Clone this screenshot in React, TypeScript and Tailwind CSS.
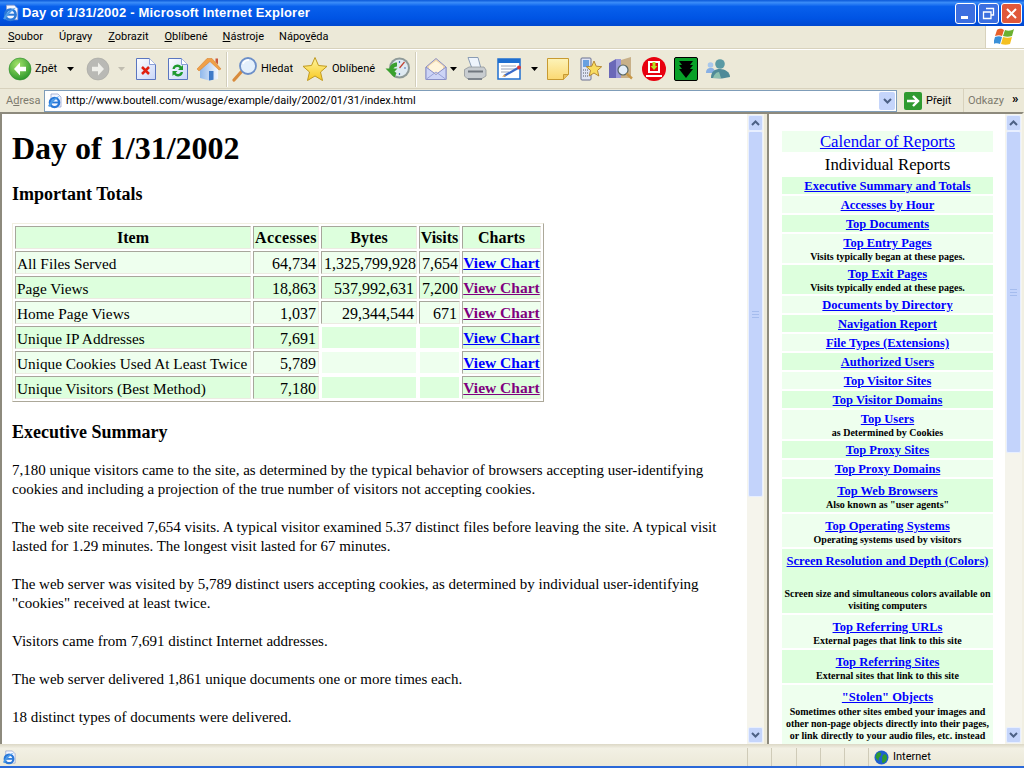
import React from "react";

const ui = "font-['Roboto',sans-serif]";
const serif = "font-['Liberation_Serif',serif]";

function IE({ s = 16 }: { s?: number }) {
  return (
    <svg width={s} height={s} viewBox="0 0 16 16" className="shrink-0">
      <path d="M4 1h7l3 3v10H4z" fill="#f4f6ff" stroke="#8a9ac8" strokeWidth=".7" />
      <circle cx="7.500" cy="9.500" r="4.600" fill="none" stroke="#2a78d8" strokeWidth="2.400" />
      <path d="M3.500 9.500h8" stroke="#2a78d8" strokeWidth="1.800" />
      <path d="M1 13c3-6 7-9 12-10-2 1-8 6-10 11z" fill="#4a9ae8" />
    </svg>
  );
}
const Back = () => (
  <svg width="24" height="24" viewBox="0 0 24 24" className="shrink-0">
    <defs>
      <radialGradient id="g1" cx=".4" cy=".3" r=".8"><stop offset="0" stopColor="#a4e36a" /><stop offset="1" stopColor="#1f8f24" /></radialGradient>
    </defs>
    <circle cx="12" cy="12" r="11" fill="url(#g1)" stroke="#2a8a2a" strokeWidth=".6" />
    <path d="M12 5.500 6 12l6 6.500v-4.200h6v-4.600h-6z" fill="#fff" />
  </svg>
);
const Fwd = () => (
  <svg width="24" height="24" viewBox="0 0 24 24" className="shrink-0">
    <circle cx="12" cy="12" r="11" fill="#b9b9b5" stroke="#a5a5a0" strokeWidth=".6" />
    <path d="M12 5.500 18 12l-6 6.500v-4.200H6v-4.600h6z" fill="#efefea" />
  </svg>
);
const Doc = ({ children }: { children: React.ReactNode }) => (
  <svg width="22" height="24" viewBox="0 0 22 24" className="shrink-0">
    <defs><linearGradient id="d" x1="0" y1="0" x2="1" y2="1"><stop offset="0" stopColor="#ffffff" /><stop offset="1" stopColor="#c8d6f8" /></linearGradient></defs>
    <path d="M1.500 1.500h13l6 6v15h-19z" fill="url(#d)" stroke="#5a76c0" />
    <path d="M14.500 1.500v6h6" fill="#fff" stroke="#8aa0d8" />
    {children}
  </svg>
);
const Home = () => (
  <svg width="26" height="24" viewBox="0 0 26 24" className="shrink-0">
    <defs><linearGradient id="h" x1="0" y1="0" x2="1" y2="0"><stop offset="0" stopColor="#8fb8ec" /><stop offset="1" stopColor="#f4f6fc" /></linearGradient></defs>
    <path d="M4 11 13 4l9 7v11l-9 1.500L4 21z" fill="url(#h)" />
    <path d="M1 12 11 1.500h5L25 12l-2 1-9-8.500L3 14z" fill="#f0a048" stroke="#d47a24" strokeWidth=".5" />
    <path d="M19.500 1.500h2.500v6l-2.500-2.500z" fill="#c8563a" />
    <path d="M13 14h4.500v8.800L13 23.500z" fill="#3f7ac8" />
  </svg>
);
const Search = () => (
  <svg width="26" height="26" viewBox="0 0 26 26" className="shrink-0">
    <path d="M2 24 10 15" stroke="#d88b3c" strokeWidth="3.200" strokeLinecap="round" />
    <circle cx="16" cy="10" r="8" fill="#e4f0fc" stroke="#6c8fc8" strokeWidth="1.800" />
    <path d="M11 8c1-3 3-4 6-4" stroke="#fff" strokeWidth="1.500" fill="none" />
  </svg>
);
const Star = () => (
  <svg width="26" height="26" viewBox="0 0 26 26" className="shrink-0">
    <defs><linearGradient id="st" x1="0" y1="0" x2="0" y2="1"><stop offset="0" stopColor="#fff6a0" /><stop offset="1" stopColor="#f8c820" /></linearGradient></defs>
    <path d="M13 1.500 16.500 9.500 25 10.300 18.500 16 20.500 24.500 13 20 5.500 24.500 7.500 16 1 10.300 9.500 9.500z" fill="url(#st)" stroke="#c09a20" />
  </svg>
);
const History = () => (
  <svg width="26" height="26" viewBox="0 0 26 26" className="shrink-0">
    <circle cx="14.500" cy="12" r="10.500" fill="#8f9a98" />
    <circle cx="14.500" cy="12" r="8.500" fill="#dfeaf2" />
    <path d="M14.500 12 19.500 6" stroke="#c04030" strokeWidth="1.200" />
    <path d="M14.500 5v2M21 12h-2M14.500 19v-2" stroke="#4a70b8" strokeWidth="1.200" />
    <path d="M.5 12.500h4C5 9 8 6.500 12 6.500v4c-2 0-3 1-3.500 2h4l-3 3 2 1.500-2 4.500z" fill="#3aa02f" />
  </svg>
);
const Mail = () => (
  <svg width="24" height="24" viewBox="0 0 24 24" className="shrink-0">
    <path d="M2 10 12 1.500 22 10v12.500H2z" fill="#f2d8ae" stroke="#8a90c8" />
    <path d="M5 9l7-5 7 5v4l-7 4-7-4z" fill="#fff4dc" />
    <path d="M2 10l10 7.500L22 10v12.500H2z" fill="#cdd4f6" stroke="#8a90c8" />
    <path d="M2.500 22 12 15l9.500 7" fill="none" stroke="#9aa2d8" />
  </svg>
);
const Printer = () => (
  <svg width="24" height="24" viewBox="0 0 24 24" className="shrink-0">
    <path d="M5 .5h10l3 11H9z" fill="#eef4fc" stroke="#8a9cb4" />
    <path d="M1.500 12.500 6 10h15l2 3v6l-4 2.500H4L1.500 19z" fill="#c8ccd0" stroke="#868c94" strokeWidth=".7" />
    <path d="M5 14.500h15" stroke="#70767e" strokeWidth="2" />
    <path d="M5 21h14v2H5z" fill="#7e848c" />
  </svg>
);
const Edit = () => (
  <svg width="26" height="24" viewBox="0 0 26 24" className="shrink-0">
    <rect x="1" y="2" width="22" height="20" fill="#fff" stroke="#1f6fd0" strokeWidth="1.500" />
    <rect x="1" y="2" width="22" height="4" fill="#1f6fd0" />
    <path d="M4 9h15M4 12h15M4 15h8" stroke="#9aa4b8" />
    <path d="M7 19 21 11" stroke="#3a6ac8" strokeWidth="2.200" />
    <path d="M5 20l2.500-2.500 1.500 1.500z" fill="#e8a040" />
    <circle cx="22" cy="10.500" r="2" fill="#d83a3a" />
  </svg>
);
const Note = () => (
  <svg width="23" height="23" viewBox="0 0 23 23" className="shrink-0">
    <defs><linearGradient id="n" x1="0" y1="0" x2="0" y2="1"><stop offset="0" stopColor="#fdf3b8" /><stop offset="1" stopColor="#fbd872" /></linearGradient></defs>
    <path d="M.5.500h21v16l-5 5H.5z" fill="url(#n)" stroke="#c89a30" />
    <path d="M21.500 16.500h-5v5" fill="#e8c060" stroke="#c89a30" />
  </svg>
);
const PhoneStar = () => (
  <svg width="22" height="24" viewBox="0 0 22 24" className="shrink-0">
    <rect x="1" y="1" width="10" height="22" rx="1" fill="#dfe4f4" stroke="#6a7090" />
    <rect x="3" y="3" width="6" height="7" fill="#6aa0e0" />
    <path d="M3 13h6M3 16h6M3 19h6" stroke="#50545f" strokeDasharray="1 1" />
    <path d="M14 4l2.200 5.200 5.500.5-4.200 3.700 1.300 5.600-4.800-3-4.800 3 1.300-5.600-4.200-3.700 5.500-.5z" fill="#f8dc60" stroke="#b0802a" strokeWidth=".9" />
  </svg>
);
const Book = () => (
  <svg width="24" height="24" viewBox="0 0 24 24" className="shrink-0">
    <path d="M0 6l7-4v19H0z" fill="#6a68b8" />
    <path d="M7 2h5v19H7z" fill="#9a98d8" />
    <path d="M12 3l10-3v21H12z" fill="#c8b088" />
    <circle cx="14" cy="13" r="5" fill="#e4eef8" stroke="#566" strokeWidth="1.200" />
    <path d="m17.500 16.500 5.500 5" stroke="#c89848" strokeWidth="2.400" />
  </svg>
);
const RedIcon = () => (
  <svg width="24" height="24" viewBox="0 0 24 24" className="shrink-0">
    <circle cx="12" cy="12" r="12" fill="#e8000f" />
    <rect x="6" y="4" width="12" height="12" fill="#fff" />
    <rect x="8" y="6" width="8" height="8" fill="#e8000f" />
    <path d="M10.500 5h3v4h2L12 13 8.500 9h2z" fill="#b8e020" />
    <path d="M4 18h16v2H4z" fill="#fff" />
  </svg>
);
const GreenIcon = () => (
  <svg width="24" height="24" viewBox="0 0 24 24" className="shrink-0">
    <rect x=".5" y=".5" width="23" height="23" rx="1.500" fill="#08a028" stroke="#000" />
    <path d="M5 4h14l-3 4h3l-3 4h3l-7 9-7-9h3L5 8h3z" fill="#000" />
  </svg>
);
const Msn = () => (
  <svg width="24" height="20" viewBox="0 0 24 20" className="shrink-0">
    <circle cx="4.500" cy="6" r="2.800" fill="#a8c8ec" />
    <path d="M0 14c0-4 2-5 5-5s4 2 4 5z" fill="#88b0e4" />
    <circle cx="14" cy="5" r="4.800" fill="#5a9aa4" />
    <path d="M5 19c0-7 4-9 9-9s10 3 10 8l-8 1.500z" fill="#4f8a98" />
    <path d="M7 19c1-3 3-6 6-6l2 6z" fill="#8cc0b0" />
  </svg>
);
const Flag = () => (
  <svg width="22" height="20" viewBox="0 0 22 20">
    <path d="M3 3c3-2 5-1 7 0l-2 6C6 8 4 8 1 9z" fill="#e8602a" />
    <path d="M11 3c3 1 6 1 9-1l-2 7c-3 1-6 1-9 0z" fill="#6bb030" />
    <path d="M1 10c3-1 5-1 7 0l-2 7c-2-1-4-1-7 0z" fill="#3a90d8" />
    <path d="M9 10c3 1 6 1 9 0l-2 7c-3 1-6 1-9 0z" fill="#f4c020" />
  </svg>
);
const Caret = ({ c = "#000" }: { c?: string }) => (
  <svg width="7" height="4" viewBox="0 0 7 4" className="block shrink-0"><path d="M0 0h7L3.500 4z" fill={c} /></svg>
);
const Sep = () => <div className="w-[2px] h-[35px] bg-[#d2cebb] border-r border-white mx-[4px] shrink-0" />;

function WinBtn({ children, red }: { children: React.ReactNode; red?: boolean }) {
  return (
    <div className={`w-[21px] h-[21px] rounded-[3px] border border-white flex items-center justify-center ${red ? "bg-[#e0583a]" : "bg-[#3c6fe0]"}`}>
      {children}
    </div>
  );
}

function Chevron({ up }: { up?: boolean }) {
  return (
    <div className="w-[15px] h-[16px] mx-auto rounded-[2px] bg-[#c5d5fb] border border-[#e8efff] flex items-center justify-center shrink-0">
      <svg width="9" height="6" viewBox="0 0 9 6">
        <path d={up ? "M1 5l3.500-3.500L8 5" : "M1 1l3.500 3.500L8 1"} fill="none" stroke="#4d6185" strokeWidth="2" />
      </svg>
    </div>
  );
}

function Scrollbar({ thumb }: { thumb: number }) {
  return (
    <div className="w-[17px] h-full bg-[#f5f4ec] flex flex-col pt-[1px] pb-[1px] shrink-0 overflow-hidden">
      <Chevron up />
      <div className="flex-1 min-h-0 flex flex-col">
        <div className="w-[15px] mx-auto rounded-[2px] bg-[#c3d3fb] border border-[#e8efff] flex items-center justify-center shrink-0" style={{ height: thumb }}>
          <div className="w-[7px] h-[7px] border-y border-[#a5bcee] flex flex-col justify-center"><div className="h-px bg-[#a5bcee]" /></div>
        </div>
      </div>
      <Chevron />
    </div>
  );
}

const dark = "bg-[#ddffdd]";
const light = "bg-[#eeffee]";
const inset = "border border-t-[#a7a69b] border-l-[#a7a69b] border-r-[#ecebe2] border-b-[#ecebe2]";

type Row = { n: string; a: string; b?: string; v?: string; visited?: boolean };
const rows: Row[] = [
  { n: "All Files Served", a: "64,734", b: "1,325,799,928", v: "7,654" },
  { n: "Page Views", a: "18,863", b: "537,992,631", v: "7,200", visited: true },
  { n: "Home Page Views", a: "1,037", b: "29,344,544", v: "671", visited: true },
  { n: "Unique IP Addresses", a: "7,691" },
  { n: "Unique Cookies Used At Least Twice", a: "5,789" },
  { n: "Unique Visitors (Best Method)", a: "7,180", visited: true },
];

function Th({ children, w }: { children: React.ReactNode; w: string }) {
  return <th className={`${dark} ${inset} ${w} h-[23px] p-0 text-center font-bold text-[16px] whitespace-nowrap`}>{children}</th>;
}

function TotalsTable() {
  return (
    <table className="table-fixed w-[532px] border-separate border-spacing-[2px] border border-t-[#f1efe2] border-l-[#f1efe2] border-r-[#aca899] border-b-[#aca899] text-[16px] leading-[19px] mt-[19px] text-black">
      <thead>
        <tr>
          <Th w="w-[236px]">Item</Th>
          <Th w="w-[66px]"><span className="tracking-[0.4px]">Accesses</span></Th>
          <Th w="w-[96px]">Bytes</Th>
          <Th w="w-[41px]">Visits</Th>
          <Th w="w-[79px]">Charts</Th>
        </tr>
      </thead>
      <tbody>
        {rows.map((r, i) => {
          const bg = i % 2 === 0 ? light : dark;
          return (
            <tr key={r.n}>
              <td className={`${bg} ${inset} h-[23px] p-0 pl-[1px] pt-[1px] whitespace-nowrap text-[15.300px]`}>{r.n}</td>
              <td className={`${bg} ${inset} p-0 px-[2px] pt-[1px] text-right`}>{r.a}</td>
              <td className={`${bg} ${r.b ? inset : "border border-white"} p-0 px-[2px] pt-[1px] text-right`}>{r.b}</td>
              <td className={`${bg} ${r.v ? inset : "border border-white"} p-0 px-[2px] pt-[1px] text-right`}>{r.v}</td>
              <td className={`${bg} ${inset} p-0 text-center whitespace-nowrap text-[15.500px]`}>
                <a className={`font-bold underline ${r.visited ? "text-[#800080]" : "text-[#0000ff]"}`}>View Chart</a>
              </td>
            </tr>
          );
        })}
      </tbody>
    </table>
  );
}

const paras = [
  "7,180 unique visitors came to the site, as determined by the typical behavior of browsers accepting user-identifying cookies and including a projection of the true number of visitors not accepting cookies.",
  "The web site received 7,654 visits. A typical visitor examined 5.37 distinct files before leaving the site. A typical visit lasted for 1.29 minutes. The longest visit lasted for 67 minutes.",
  "The web server was visited by 5,789 distinct users accepting cookies, as determined by individual user-identifying \"cookies\" received at least twice.",
  "Visitors came from 7,691 distinct Internet addresses.",
  "The web server delivered 1,861 unique documents one or more times each.",
  "18 distinct types of documents were delivered.",
];

type Nav = { t: string; s?: React.ReactNode; h?: string };
const nav: Nav[] = [
  { t: "Executive Summary and Totals" },
  { t: "Accesses by Hour" },
  { t: "Top Documents" },
  { t: "Top Entry Pages", s: "Visits typically began at these pages." },
  { t: "Top Exit Pages", s: "Visits typically ended at these pages." },
  { t: "Documents by Directory" },
  { t: "Navigation Report" },
  { t: "File Types (Extensions)" },
  { t: "Authorized Users" },
  { t: "Top Visitor Sites" },
  { t: "Top Visitor Domains" },
  { t: "Top Users", s: "as Determined by Cookies" },
  { t: "Top Proxy Sites" },
  { t: "Top Proxy Domains" },
  { t: "Top Web Browsers", s: "Also known as \"user agents\"", h: "h-[33px]" },
  { t: "Top Operating Systems", s: "Operating systems used by visitors", h: "h-[33px]" },
  { t: "Screen Resolution and Depth (Colors)", s: <><span className="block h-[19px]" />Screen size and simultaneous colors available on visiting computers</>, h: "h-[64px]" },
  { t: "Top Referring URLs", s: "External pages that link to this site", h: "h-[33px]" },
  { t: "Top Referring Sites", s: "External sites that link to this site", h: "h-[33px]" },
  { t: "\"Stolen\" Objects", s: <span className="block pt-[1px]">Sometimes other sites embed your images and<br />other non-page objects directly into their pages,<br />or link directly to your audio files, etc. instead</span>, h: "h-[60px]" },
];

function Frames() {
  return (
    <div className="flex-1 min-h-0 flex border-t-2 border-[#8d8a7d] border-l-2 border-l-[#8d8a7d] border-r-2 border-r-[#f1efe2] bg-white">
      <div className="w-[745px] h-full overflow-hidden shrink-0 px-[10px] text-black">
        <div className={`${serif} w-[725px]`}>
          <h1 className="text-[32px] leading-[37px] font-bold mt-[16px]">Day of 1/31/2002</h1>
          <h3 className="text-[18px] leading-[20px] font-bold mt-[17px]">Important Totals</h3>
          <TotalsTable />
          <h3 className="text-[18px] leading-[20px] font-bold mt-[20px]">Executive Summary</h3>
          <div className="text-[15px] leading-[19px] mt-[19px] flex flex-col gap-[19px] pr-[3px]">
            {paras.map((p) => <p key={p.slice(0, 12)}>{p}</p>)}
          </div>
        </div>
      </div>
      <Scrollbar thumb={366} />
      <div className="w-[5px] shrink-0 bg-[#ece9d8] border-r-2 border-[#8d8a7d]" />
      <div className={`flex-1 min-w-0 h-full overflow-hidden pl-[13px] pr-[12px] pt-[17px] ${serif} text-center`}>
        <div className={`${light} h-[21px] text-[16.800px] leading-[21px]`}>
          <a className="text-[#0000ff] underline">Calendar of Reports</a>
        </div>
        <div className="h-[25px] text-[16.800px] leading-[26px] text-black">Individual Reports</div>
        <div className="flex flex-col gap-[2px]">
          {nav.map((n, i) => (
            <div key={n.t} className={`${i % 2 === 0 ? dark : light} shrink-0 ${n.h ?? ""}`}>
              <a className={`block text-[12.500px] leading-[16px] font-bold text-[#0000ff] underline ${n.h ? "pt-[4px]" : "pt-[1px]"}`}>{n.t}</a>
              {n.s && <div className="text-[10px] leading-[12px] font-bold text-black">{n.s}</div>}
            </div>
          ))}
        </div>
      </div>
      <Scrollbar thumb={322} />
    </div>
  );
}

export default function App() {
  return (
    <div className={`w-[1024px] h-[768px] overflow-hidden flex flex-col bg-[#ece9d8] ${ui}`}>
      <div className="h-[26px] shrink-0 flex items-center pl-[2px] pr-[2px] bg-[linear-gradient(180deg,#0a58d8_0%,#3a8cf8_10%,#0860ec_25%,#0054e4_70%,#0048d0_100%)]">
        <IE s={18} />
        <span className="ml-[2px] text-white font-['Liberation_Sans',sans-serif] font-bold text-[13px] tracking-[0.2px] whitespace-nowrap">Day of 1/31/2002 - Microsoft Internet Explorer</span>
        <div className="ml-auto flex gap-[2px]">
          <WinBtn><div className="w-[7px] h-[3px] bg-white mt-[8px] -ml-[2px]" /></WinBtn>
          <WinBtn>
            <svg width="13" height="13" viewBox="0 0 13 13"><path d="M4 1.500h7.500V8H9M1.500 5H9v6.500H1.500z" fill="none" stroke="#fff" strokeWidth="1.300" /></svg>
          </WinBtn>
          <WinBtn red>
            <svg width="13" height="13" viewBox="0 0 13 13"><path d="M2 2l9 9M11 2l-9 9" stroke="#fff" strokeWidth="2" /></svg>
          </WinBtn>
        </div>
      </div>

      <div className="h-[23px] shrink-0 flex items-center border-b border-[#d8d2bd] text-[11px] text-black">
        <div className="flex-1 flex items-center pl-[8px] gap-[16px]">
          <span><u>S</u>oubor</span>
          <span>Úpr<u>a</u>vy</span>
          <span><u>Z</u>obrazit</span>
          <span><u>O</u>blíbené</span>
          <span className="-ml-[1px]"><u>N</u>ástroje</span>
          <span className="-ml-[1px]">Nápo<u>v</u>ěda</span>
        </div>
        <div className="w-[39px] h-full bg-white border-l border-[#d8d2bd] flex items-center justify-center"><Flag /></div>
      </div>

      <div className="h-[40px] shrink-0 flex items-center border-b border-[#d8d2bd] border-t border-t-white pl-[8px] text-[11px] text-black">
        <Back />
        <span className="ml-[3px] w-[22px]">Zpět</span>
        <span className="ml-[10px]"><Caret /></span>
        <span className="ml-[12px]"><Fwd /></span>
        <span className="ml-[8px]"><Caret c="#c0bdb0" /></span>
        <span className="ml-[10px]"><Doc><path d="M7 10l7 7M14 10l-7 7" stroke="#e02010" strokeWidth="2.500" /></Doc></span>
        <span className="ml-[10px]"><Doc><path d="M5.500 12a5 5 0 0 1 9-2.500l1.500-1.500v5h-5l1.700-1.700a2.800 2.800 0 0 0-5 .7zM16 15a5 5 0 0 1-9 2.500L5.500 19v-5h5l-1.700 1.700a2.800 2.800 0 0 0 5-.7z" fill="#1f9a2f" /></Doc></span>
        <span className="ml-[7px]"><Home /></span>
        <Sep />
        <Search />
        <span className="ml-[3px] w-[31px]">Hledat</span>
        <span className="ml-[10px]"><Star /></span>
        <span className="ml-[4px] w-[41px]">Oblíbené</span>
        <span className="ml-[12px]"><History /></span>
        <Sep />
        <span className="ml-[3px]"><Mail /></span>
        <span className="ml-[2px]"><Caret /></span>
        <span className="ml-[6px]"><Printer /></span>
        <span className="ml-[10px]"><Edit /></span>
        <span className="ml-[8px]"><Caret /></span>
        <span className="ml-[9px]"><Note /></span>
        <span className="ml-[10px]"><PhoneStar /></span>
        <span className="ml-[7px]"><Book /></span>
        <span className="ml-[9px]"><RedIcon /></span>
        <span className="ml-[8px]"><GreenIcon /></span>
        <span className="ml-[8px]"><Msn /></span>
      </div>

      <div className="h-[23px] shrink-0 flex items-center text-[11px] text-black">
        <span className="ml-[6px] w-[38px] text-[#7d7a6d] pt-[1px]">A<u>d</u>resa</span>
        <div className="w-[853px] h-[22px] bg-white border border-[#7f9db9] flex items-center pl-[2px] pr-[1px]">
          <IE s={16} />
          <span className="ml-[3px] pt-[1px] text-[11px] whitespace-nowrap">http://www.boutell.com/wusage/example/daily/2002/01/31/index.html</span>
          <div className="ml-auto w-[16px] h-[18px] bg-[#c5d5fb] rounded-[2px] flex items-center justify-center">
            <svg width="9" height="6" viewBox="0 0 9 6"><path d="M1 1l3.500 3.500L8 1" fill="none" stroke="#4d6185" strokeWidth="2" /></svg>
          </div>
        </div>
        <span className="ml-[7px] w-[18px] h-[18px] rounded-[2px] bg-[#2f9a30] flex items-center justify-center shrink-0">
          <svg width="14" height="12" viewBox="0 0 14 12"><path d="M1 6h10M7 1l5 5-5 5" fill="none" stroke="#fff" strokeWidth="2.400" /></svg>
        </span>
        <span className="ml-[4px] w-[25px] pt-[1px]">Přejít</span>
        <div className="ml-[12px] h-full border-l border-[#d8d2bd] pl-[4px] pt-[1px] w-[49px] flex items-center text-[#7d7a6d]">Odkazy</div>
        <span className="-mt-[4px] text-[13px] font-bold leading-none">»</span>
      </div>

      <Frames />

      <div className="h-[22px] shrink-0 flex items-end bg-[linear-gradient(180deg,#dcd8c6_0%,#f2f0e4_20%,#ece9d8_100%)] text-[11px] text-black">
        <span className="ml-[2px] mb-[1px]"><IE s={15} /></span>
        <div className="ml-[730px] flex h-[18px]">
          <div className="w-[24px] border-l border-[#cfcbb8]" />
          <div className="w-[25px] border-l border-[#cfcbb8]" />
          <div className="w-[24px] border-l border-[#cfcbb8]" />
          <div className="w-[24px] border-l border-[#cfcbb8]" />
          <div className="w-[24px] border-l border-[#cfcbb8]" />
        </div>
        <div className="h-[18px] flex items-center border-l border-[#cfcbb8] pl-[5px]">
          <svg width="15" height="15" viewBox="0 0 15 15"><circle cx="7.500" cy="7.500" r="7" fill="#1f5fd0" /><path d="M3 3c3-2 5 0 4 2S4 8 5 10 2 9 1.500 7zM9 5c3-2 4 1 4 3s-2 5-4 5 0-4-1-5z" fill="#2f9a2f" /></svg>
          <span className="ml-[4px]">Internet</span>
        </div>
      </div>
      <div className="h-[2px] shrink-0 bg-[#2a68d8]" />
    </div>
  );
}
